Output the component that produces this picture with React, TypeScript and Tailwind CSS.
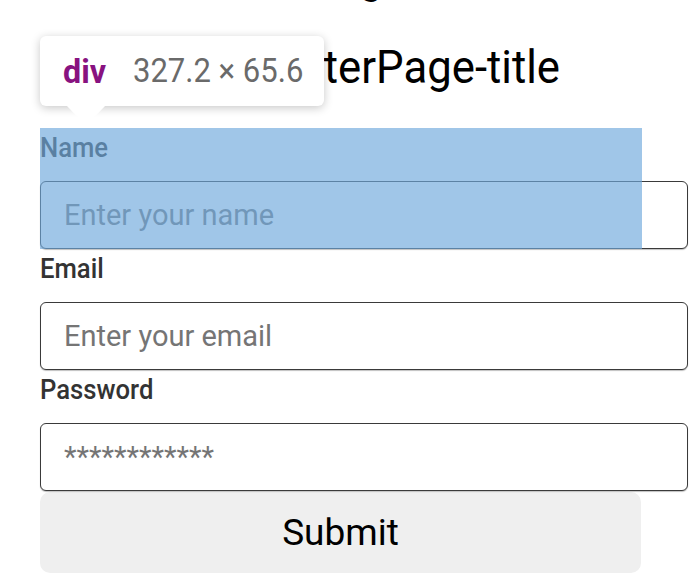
import React from "react";

export default function App() {
  const font = { fontFamily: "Roboto, 'Noto Sans', sans-serif" };
  return (
    <div className="relative h-[585px] w-[690px] overflow-hidden bg-white" style={font}>
      <div className="-mt-[46px] h-[46px] pl-[309px] text-[46px] leading-[46px] text-black">
        <span className="inline-block origin-left scale-x-[0.95]">Register</span>
      </div>
      <div className="mt-[44px] h-[46px] pl-[216px] text-[46px] leading-[46px] text-black">
        <span className="inline-block origin-left scale-x-[0.95]">RegisterPage-title</span>
      </div>

      <form className="ml-[40px] mt-[38px] w-[602px]">
        {[
          { label: "Name", ph: "Enter your name", hl: true },
          { label: "Email", ph: "Enter your email", hl: false },
          { label: "Password", ph: "************", hl: false },
        ].map((f) => (
          <div key={f.label} className="relative">
            <label className="block h-[53px] text-[27px] font-medium leading-[40px] text-[#333333]">
              <span className="inline-block origin-left scale-x-[0.95]">{f.label}</span>
            </label>
            <input
              type="text"
              placeholder={f.ph}
              className="block h-[68px] w-[648px] rounded-[6px] border border-[#3a3a3a] bg-white pl-[23px] text-[29px] text-black shadow-[0_1px_1px_rgba(0,0,0,0.25)] outline-none placeholder:text-[#757575]"
            />
            {f.hl && <div className="pointer-events-none absolute inset-0 bg-[rgba(111,168,220,0.66)]" />}
          </div>
        ))}
        <button
          type="button"
          className="mt-[1px] block h-[81px] w-[601px] rounded-[10px] bg-[#efefef] text-[37px] text-black"
        >
          Submit
        </button>
      </form>

      <div className="absolute left-[40px] top-[36px]">
        <div className="flex h-[70px] w-[284px] items-center rounded-[6px] bg-white pl-[23px] shadow-[0_2px_10px_rgba(0,0,0,0.22)]">
          <span className="inline-block origin-left scale-x-[0.95] text-[34px] font-bold text-[#881280]">div</span>
          <span className="ml-[25px] inline-block origin-left scale-x-[0.94] text-[33px] text-[#6a6a6a]">327.2 × 65.6</span>
        </div>
        <svg className="absolute left-[27px] top-[70px]" width="38" height="21" viewBox="0 0 38 21">
          <polygon points="0,0 38,0 19,20" fill="#ffffff" />
        </svg>
      </div>
    </div>
  );
}
